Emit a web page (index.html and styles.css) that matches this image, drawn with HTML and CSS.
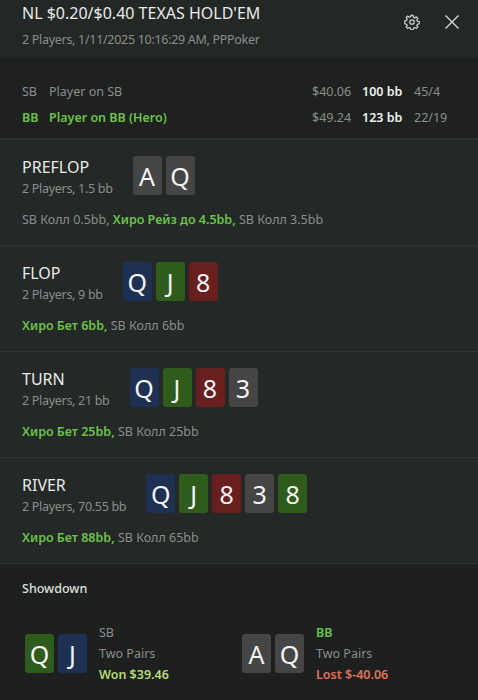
FILE: index.html
```html
<!DOCTYPE html>
<html lang="ru">
<head>
  <meta charset="UTF-8" />
  <title>Hand history</title>
  <link rel="stylesheet" href="styles.css">
</head>
<body>

  <div id="header">
    <div class="head-text">
      <div class="title">NL $0.20/$0.40 TEXAS HOLD'EM</div>
      <div class="sub">2 Players, 1/11/2025 10:16:29 AM, PPPoker</div>
    </div>
    <div class="head-icons">
      <svg width="16" height="16" viewBox="0 0 16 16" fill="none" stroke="#c9cbc9" stroke-width="1.3">
        <path d="M6.9 1.5h2.2l.4 1.8 1.2.6 1.6-1 1.5 1.5-1 1.6.6 1.2 1.8.4v2.2l-1.8.4-.6 1.2 1 1.6-1.5 1.5-1.6-1-1.2.6-.4 1.8H6.9l-.4-1.8-1.2-.6-1.6 1-1.5-1.5 1-1.6-.6-1.2-1.8-.4V6.9l1.8-.4.6-1.2-1-1.6 1.5-1.5 1.6 1 1.2-.6z"/>
        <circle cx="8" cy="8" r="2.2"/>
      </svg>
      <svg width="16" height="16" viewBox="0 0 16 16" stroke="#d8dad8" stroke-width="1.4">
        <path d="M1.5 1.5l13 13M14.5 1.5l-13 13"/>
      </svg>
    </div>
  </div>

  <div id="players">
    <div class="prow">
      <span>SB</span><span>Player on SB</span><span>$40.06</span><b>100 bb</b><span>45/4</span>
    </div>
    <div class="prow hero">
      <span>BB</span><span>Player on BB (Hero)</span><span class="stack">$49.24</span><b>123 bb</b><span class="ratio">22/19</span>
    </div>
  </div>

  <div class="street">
    <div class="street-top">
      <div class="street-name">
        <div class="name">PREFLOP</div>
        <div class="sub">2 Players, 1.5 bb</div>
      </div>
      <div class="cards">
        <span class="card gray">A</span><span class="card gray">Q</span>
      </div>
    </div>
    <div class="actions">SB Колл 0.5bb, <b>Хиро Рейз до 4.5bb,</b> SB Колл 3.5bb</div>
  </div>

  <div class="street">
    <div class="street-top">
      <div class="street-name">
        <div class="name">FLOP</div>
        <div class="sub">2 Players, 9 bb</div>
      </div>
      <div class="cards">
        <span class="card blue">Q</span><span class="card green">J</span><span class="card red">8</span>
      </div>
    </div>
    <div class="actions"><b>Хиро Бет 6bb,</b> SB Колл 6bb</div>
  </div>

  <div class="street">
    <div class="street-top">
      <div class="street-name">
        <div class="name">TURN</div>
        <div class="sub">2 Players, 21 bb</div>
      </div>
      <div class="cards">
        <span class="card blue">Q</span><span class="card green">J</span><span class="card red">8</span><span class="card gray">3</span>
      </div>
    </div>
    <div class="actions"><b>Хиро Бет 25bb,</b> SB Колл 25bb</div>
  </div>

  <div class="street">
    <div class="street-top">
      <div class="street-name">
        <div class="name">RIVER</div>
        <div class="sub">2 Players, 70.55 bb</div>
      </div>
      <div class="cards">
        <span class="card blue">Q</span><span class="card green">J</span><span class="card red">8</span><span class="card gray">3</span><span class="card green">8</span>
      </div>
    </div>
    <div class="actions"><b>Хиро Бет 88bb,</b> SB Колл 65bb</div>
  </div>

  <div id="showdown">
    <div class="sd-title">Showdown</div>
    <div class="sd-grid">
      <div class="sd-player">
        <div class="cards">
          <span class="card green">Q</span><span class="card blue">J</span>
        </div>
        <div class="sd-info">
          <div>SB</div>
          <div>Two Pairs</div>
          <div class="won">Won $39.46</div>
        </div>
      </div>
      <div class="sd-player">
        <div class="cards">
          <span class="card gray">A</span><span class="card gray">Q</span>
        </div>
        <div class="sd-info">
          <div class="hero-pos">BB</div>
          <div>Two Pairs</div>
          <div class="lost">Lost $-40.06</div>
        </div>
      </div>
    </div>
  </div>

</body>
</html>
```

FILE: styles.css
```css
body {
  margin: 0;
  width: 478px;
  height: 700px;
  overflow: hidden;
  background: #1d201e;
  color: #8b8e8c;
  font-family: "Noto Sans", "Open Sans", sans-serif;
  font-size: 12.5px;
}
#header {
  height: 57px;
  display: flex;
  justify-content: space-between;
  padding: 2px 18px 0 22px;
  box-sizing: border-box;
  background: #232725;
}
.title {
  color: #e9ebe9;
  font-size: 16px;
  line-height: 22px;
}
.sub {
  line-height: 18px;
  margin-top: 7px;
  letter-spacing: -0.3px;
}
.head-icons {
  display: flex;
  gap: 24px;
  padding-top: 12px;
}
#players {
  height: 83px;
  padding: 21px 22px 0;
  box-sizing: border-box;
  background: #1e211f;
  border-bottom: 2px solid #2d312e;
}
.prow {
  display: grid;
  grid-template-columns: 27px 1fr 50px 52px 42px;
  height: 26px;
  align-items: center;
}
.prow b {
  color: #eef0ee;
  font-weight: 600;
}
.prow.hero span:nth-child(-n+2) {
  color: #6cc24a;
  font-weight: 600;
}
.street {
  height: 106px;
  padding: 16px 22px 0;
  box-sizing: border-box;
  background: #242826;
  border-bottom: 1px solid #2f3330;
}
.street-top {
  display: flex;
  gap: 20px;
}
.street-name {
  padding-top: 1px;
}
.street-name .name {
  color: #e9ebe9;
  font-size: 16px;
  line-height: 20px;
}
.street-name .sub {
  margin-top: 3px;
}
.cards {
  display: flex;
  gap: 4px;
}
.card {
  width: 29px;
  height: 39px;
  border-radius: 3px;
  display: flex;
  align-items: center;
  justify-content: center;
  color: #f4f4f4;
  font-size: 25px;
}
.gray { background: #454545; }
.blue { background: #1f3152; }
.green { background: #2f5b1c; }
.red { background: #6a1f1f; }
.actions {
  margin-top: 13px;
  line-height: 18px;
}
.actions b {
  color: #6cc24a;
  font-weight: 600;
}
#showdown {
  padding: 16px 0 0 22px;
}
.sd-title {
  color: #dfe1df;
  font-weight: 500;
  line-height: 18px;
}
.sd-grid {
  display: grid;
  grid-template-columns: 217px 1fr;
  margin-top: 24px;
  padding-left: 3px;
}
.sd-player {
  display: flex;
  align-items: center;
  gap: 12px;
}
.sd-info div {
  line-height: 21px;
}
.sd-info .hero-pos {
  color: #6cc24a;
  font-weight: 600;
}
.won {
  color: #b3dc72;
  font-weight: 600;
}
.lost {
  color: #e2705a;
  font-weight: 600;
}
```
